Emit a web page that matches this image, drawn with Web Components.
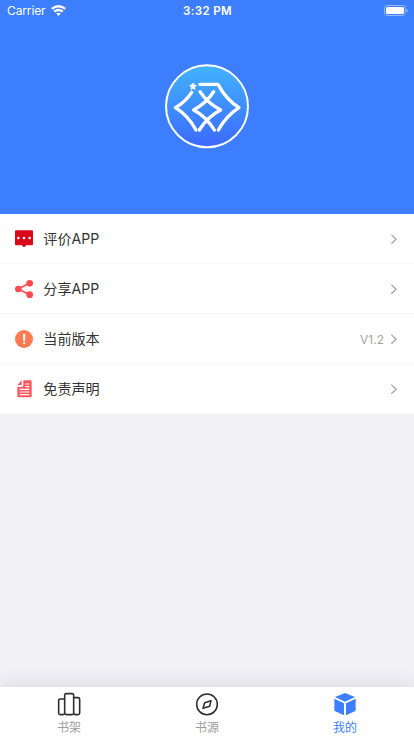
<!DOCTYPE html>
<html lang="zh">
<head>
<meta charset="utf-8">
<title>我的</title>
<style>
html,body{margin:0;height:100%;overflow:hidden}
body{font-family:Inter,"Noto Sans CJK SC",sans-serif;background:#f2f1f6}
</style>
</head>
<body>
<profile-page></profile-page>
<script>
const icons = {
  comment: `<svg viewBox="0 0 60 60" width="20" height="20"><path fill="#d9091b" d="M6 4h48q3 0 3 3v39q0 3-3 3H37l-7 6-7-6H6q-3 0-3-3V7q0-3 3-3z"/><g fill="#fff"><circle cx="13" cy="27" r="3.900"/><circle cx="30" cy="27" r="3.900"/><circle cx="47" cy="27" r="3.900"/></g></svg>`,
  share: `<svg viewBox="0 0 60 60" width="20" height="20"><path d="M47 12 13 30l34 17" fill="none" stroke="#ff4b50" stroke-width="5"/><g fill="#ff4b50"><circle cx="47" cy="13" r="10"/><circle cx="13" cy="30" r="10"/><circle cx="47" cy="47" r="10"/></g></svg>`,
  version: `<svg viewBox="0 0 60 60" width="20" height="20"><circle cx="30" cy="30" r="27" fill="#ff7a52"/><path d="M27 14h7l-1 23h-5z" fill="#fff"/><circle cx="30.500" cy="43" r="3.200" fill="#fff"/></svg>`,
  notice: `<svg viewBox="0 0 60 60" width="20" height="20"><path d="M28 4h22q3 0 3 3v45q0 3-3 3H13q-3 0-3-3V24h13q5 0 5-5zM23 4v12q0 3-3 3H10z" fill="#ff575d"/><path d="M34 15h12M34 23h12M17 31h29M17 39h29M17 47h29" stroke="#fff" stroke-width="3.400"/></svg>`,
  shelf: `<svg viewBox="0 0 72 72" width="24" height="24" fill="none" stroke="#2f2f2f" stroke-width="4.800"><rect x="23" y="5" width="27" height="63" rx="5"/><path d="M23 21H9q-4 0-4 4v38q0 5 5 5h8q5 0 5-5M50 17h13q5 0 5 5v41q0 5-5 5h-8q-5 0-5-5"/></svg>`,
  compass: `<svg viewBox="0 0 72 72" width="24" height="24" fill="none" stroke="#2f2f2f" stroke-width="4.700" stroke-linejoin="round"><circle cx="36" cy="37" r="31"/><path d="m48 26-4 17-20 6 5-17z"/></svg>`,
  cube: `<svg viewBox="0 0 72 72" width="24" height="24" fill="#3d7eff"><path d="M36 3 66 15 36 29 6 15zM4 20l29 14v36L7 58q-3-1-3-5zM68 20v33q0 4-3 5L39 70V34z"/></svg>`
};

function define(name, render) {
  customElements.define(name, class extends HTMLElement {
    constructor() {
      super();
      this.attachShadow({mode: 'open'}).innerHTML = render(this);
    }
  });
}

define('status-bar', () => `
<style>
:host{display:grid;grid-template-columns:1fr auto 1fr;align-items:center;height:20px;padding:1px 6px 0 7px;box-sizing:border-box;color:#fff;font-size:12px;line-height:20px}
.left{display:flex;align-items:center;gap:5px;letter-spacing:-.12px}
.time{font-weight:600;font-size:11.500px;letter-spacing:.36px}
.battery{justify-self:end}
svg{display:block}
.wifi{margin-top:-1px}
</style>
<div class="left"><span>Carrier</span><svg class="wifi" width="15" height="11" viewBox="0 0 15 11" fill="none" stroke="#fff" stroke-width="2.300"><path d="M.8 3.900Q7.500-1.500 14.200 3.900M3.200 6.700q4.300-3.400 8.600 0"/><path d="M5.200 8.600q2.300-1.700 4.600 0L7.500 11z" fill="#fff" stroke="none"/></svg></div>
<span class="time">3:32 PM</span>
<svg class="battery" width="24" height="12" viewBox="0 0 24 12"><rect x=".5" y=".5" width="20.800" height="10" rx="2.800" fill="none" stroke="#fff" stroke-opacity=".45"/><rect x="2" y="1.900" width="18" height="7.200" rx="1.500" fill="#fff"/><path d="M22.500 3.700v4q1.300-.6 1.300-2t-1.300-2z" fill="#fff" fill-opacity=".5"/></svg>`);

define('app-logo', () => `
<style>:host{display:block;width:94px;height:94px}svg{display:block}</style>
<svg width="94" height="94" viewBox="0 0 282 282">
<defs><linearGradient id="sky" x1="0" y1="0" x2="0" y2="1"><stop offset="0" stop-color="#42b4ff"/><stop offset="1" stop-color="#3b68ff"/></linearGradient></defs>
<circle cx="141" cy="139" r="123" fill="url(#sky)" stroke="#fff" stroke-width="6"/>
<g fill="none" stroke="#fff" stroke-width="10" stroke-linecap="round" stroke-linejoin="round">
<path d="M95 97Q75 127 46 143 84 166 108 210"/>
<path d="M120 73h54Q199 119 237 143 198 168 175 210"/>
<path d="M120 95Q141 128 182 150 144 169 118 210"/>
<path d="M161 95Q141 128 101 150 138 169 163 210"/>
</g>
<path d="m99 69 3 6 7 1-5 5 1 7-6-3-6 3 1-7-5-5 7-1z" fill="#fff" stroke="#fff" stroke-width="2.500" stroke-linejoin="round"/>
</svg>`);

define('profile-header', () => `
<style>
:host{display:flex;flex-direction:column;height:214px;background:#3d7eff}
app-logo{align-self:center;margin-top:40px}
</style><status-bar></status-bar><app-logo></app-logo>`);

define('menu-row', el => `
<style>
:host{display:flex;align-items:center;height:50px;box-sizing:border-box;padding:0 14px;background:#fff;border-bottom:1px solid #f8f8fa;color:#333;font-size:14.100px}
.icon{display:flex;width:20px;margin-right:9.300px}
.label{flex:1;line-height:20px}
.value{color:#a5a5a5;font-size:12px;line-height:18px;margin:2px 4px 0 0}
svg{display:block}
</style>
<span class="icon">${icons[el.getAttribute('icon')]}</span>
<span class="label"><slot></slot></span>
<span class="value"><slot name="value"></slot></span>
<svg width="12" height="12" viewBox="0 0 12 12" fill="none" stroke="#a5a5a5" stroke-width="1.300"><path d="m3.300 1.600 4.800 4.600-4.800 4.600"/></svg>`);

define('tab-item', el => `
<style>
:host{display:flex;flex:1;flex-direction:column;align-items:center;padding-top:5px;color:#a0a0a0;font-size:12px;line-height:18px}
:host([active]){color:#3d7eff}
svg{display:block;flex-shrink:0}
span{margin-top:3px}
</style>${icons[el.getAttribute('icon')]}<span><slot></slot></span>`);

define('tab-bar', () => `
<style>:host{display:flex;height:49px;background:#fff;box-shadow:0 -2px 20px rgba(40,40,60,.12)}</style><slot></slot>`);

define('profile-page', () => `
<style>
:host{display:flex;flex-direction:column;height:736px;width:414px;overflow:hidden;background:#f2f1f6}
main{flex:1}
</style>
<profile-header></profile-header>
<main>
<menu-row icon="comment">评价APP</menu-row>
<menu-row icon="share">分享APP</menu-row>
<menu-row icon="version">当前版本<span slot="value">V1.2</span></menu-row>
<menu-row icon="notice">免责声明</menu-row>
</main>
<tab-bar>
<tab-item icon="shelf">书架</tab-item>
<tab-item icon="compass">书源</tab-item>
<tab-item icon="cube" active>我的</tab-item>
</tab-bar>`);
</script>
</body>
</html>
